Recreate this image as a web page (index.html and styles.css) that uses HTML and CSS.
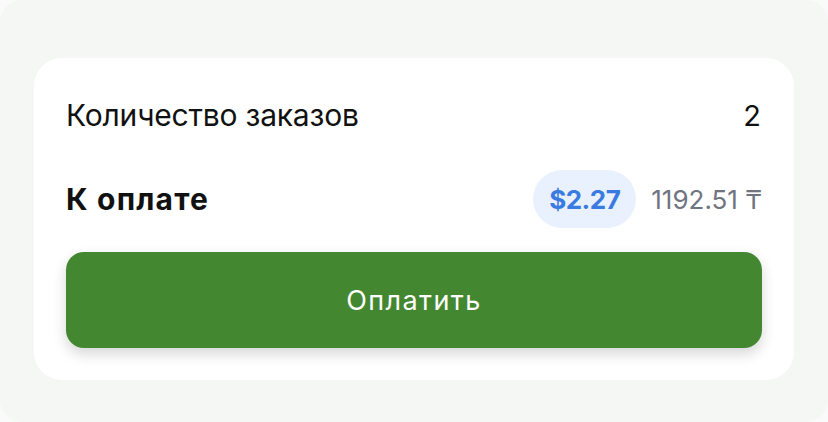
FILE: index.html
```html
<!DOCTYPE html>
<html lang="ru">
<head>
<meta charset="utf-8">
<link rel="stylesheet" href="styles.css">
</head>
<body>
<div class="panel">
  <div class="card">
    <div class="row row-count">
      <span class="label">Количество заказов</span>
      <span class="value">2</span>
    </div>
    <div class="row row-total">
      <span class="label-bold">К оплате</span>
      <div class="amounts">
        <span class="pill">$2.27</span>
        <span class="alt">1192.51 ₸</span>
      </div>
    </div>
    <button class="pay">Оплатить</button>
  </div>
</div>
</body>
</html>
```
FILE: styles.css
```css
html, body {
  margin: 0;
  padding: 0;
  background: #f9faf9;
}
body {
  width: 828px;
  height: 422px;
  font-family: Inter, "Noto Sans", sans-serif;
  color: #111;
}
.panel {
  box-sizing: border-box;
  width: 828px;
  height: 422px;
  background: #f5f7f5;
  border-radius: 22px;
  padding: 58px 34px 42px 34px;
}
.card {
  box-sizing: border-box;
  width: 760px;
  height: 322px;
  background: #fff;
  border-radius: 28px;
  padding: 32px;
  display: flex;
  flex-direction: column;
}
.row {
  display: flex;
  align-items: center;
  justify-content: space-between;
}
.row-count {
  height: 50px;
}
.label {
  font-size: 30px;
  letter-spacing: -0.2px;
}
.value {
  font-size: 29px;
  margin-right: 1px;
}
.row-total {
  height: 58px;
  margin-top: 30px;
}
.label-bold {
  font-size: 30px;
  font-weight: 700;
  letter-spacing: 1.2px;
}
.amounts {
  display: flex;
  align-items: center;
  gap: 15px;
}
.pill {
  height: 58px;
  display: flex;
  align-items: center;
  padding: 0 16px;
  border-radius: 29px;
  background: #e8f1fd;
  color: #3a7be2;
  font-weight: 700;
  font-size: 26px;
  letter-spacing: -0.5px;
}
.alt {
  color: #6f7480;
  font-size: 26px;
}
.pay {
  margin-top: 24px;
  height: 96px;
  border: none;
  border-radius: 18px;
  background: #438830;
  color: #fff;
  font-family: Inter, "Noto Sans", sans-serif;
  font-size: 27px;
  letter-spacing: 1.4px;
  box-shadow: 0 6px 14px rgba(0, 0, 0, 0.16);
}
```
